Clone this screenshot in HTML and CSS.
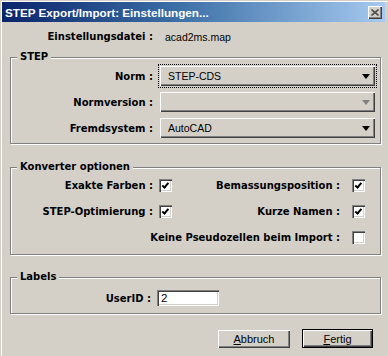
FILE: index.html
```html
<!DOCTYPE html>
<html lang="de">
<head>
<meta charset="utf-8">
<title>STEP Export/Import: Einstellungen...</title>
<link rel="stylesheet" href="styles.css">
</head>
<body>
<div class="window">
  <div class="titlebar">
    <span class="title">STEP Export/Import: Einstellungen...</span>
    <span class="close">
      <svg width="8" height="7" viewBox="0 0 8 7"><path d="M0.5 0.5 L7.5 6.5 M7.5 0.5 L0.5 6.5" stroke="#505050" stroke-width="1.6" fill="none"/></svg>
    </span>
  </div>
  <div class="content">
    <div class="filerow">
      <span class="lbl">Einstellungsdatei :</span>
      <span class="val">acad2ms.map</span>
    </div>

    <fieldset class="group step">
      <legend>STEP</legend>
      <div class="formgrid">
        <span class="lbl">Norm :</span>
        <div class="combo focused"><span class="val">STEP-CDS</span><span class="arrow"></span></div>
        <span class="lbl">Normversion :</span>
        <div class="combo disabled"><span class="val"></span><span class="arrow"></span></div>
        <span class="lbl">Fremdsystem :</span>
        <div class="combo"><span class="val">AutoCAD</span><span class="arrow"></span></div>
      </div>
    </fieldset>

    <fieldset class="group conv">
      <legend>Konverter optionen</legend>
      <div class="checkgrid">
        <span class="lbl">Exakte Farben :</span>
        <span class="cb checked"></span>
        <span class="lbl lbl2">Bemassungsposition :</span>
        <span class="cb checked"></span>
        <span class="lbl">STEP-Optimierung :</span>
        <span class="cb checked"></span>
        <span class="lbl lbl2">Kurze Namen :</span>
        <span class="cb checked"></span>
        <span class="lbl lbl2 wide">Keine Pseudozellen beim Import :</span>
        <span class="cb"></span>
      </div>
    </fieldset>

    <fieldset class="group labels">
      <legend>Labels</legend>
      <div class="userrow">
        <span class="lbl">UserID :</span>
        <span class="textbox">2</span>
      </div>
    </fieldset>

    <div class="buttons">
      <span class="btn"><u>A</u>bbruch</span>
      <span class="btn default"><u>F</u>ertig</span>
    </div>
  </div>
</div>
</body>
</html>
```

FILE: styles.css
```css
* { box-sizing: border-box; }

html, body {
  margin: 0;
  padding: 0;
  background: #d4d0c8;
}

.window {
  width: 388px;
  height: 356px;
  padding: 2px 3px 0 2px;
  background: #d4d0c8;
  box-shadow: inset 1px 1px #d4d0c8, inset 2px 2px #ffffff;
  overflow: hidden;
}

.titlebar {
  height: 20px;
  display: flex;
  align-items: center;
  justify-content: space-between;
  padding: 0 3px 0 3px;
  background: linear-gradient(to right, #0a246a 0%, #3a6ea5 45%, #a6caf0 100%);
}

.title {
  font-family: "Liberation Sans", Arial, sans-serif;
  font-weight: bold;
  font-size: 11.7px;
  color: #ffffff;
  white-space: nowrap;
}

.close {
  width: 14px;
  height: 13px;
  display: flex;
  align-items: center;
  justify-content: center;
  background: #d4d0c8;
  box-shadow: inset 1px 1px #ffffff, inset -1px -1px #404040, inset -2px -2px #808080;
}

.content {
  display: flex;
  flex-direction: column;
}

.lbl {
  font-family: "DejaVu Sans", sans-serif;
  font-weight: bold;
  font-size: 10px;
  color: #000;
  text-align: right;
  white-space: nowrap;
}

.val {
  font-family: "Liberation Sans", Arial, sans-serif;
  font-size: 10.5px;
  color: #000;
  white-space: nowrap;
}

.filerow {
  margin-top: 8px;
  display: grid;
  grid-template-columns: 151px auto;
  column-gap: 12px;
  align-items: center;
  height: 14px;
  line-height: 14px;
}

.group {
  margin: 0 5px 0 8px;
  padding: 0 4px 0 0;
  width: 371px;
  border: 1px solid #808080;
  box-shadow: inset 1px 1px #ffffff, 1px 1px #ffffff;
  min-width: 0;
}

.group legend {
  margin-left: 6px;
  padding: 0 3px;
  height: 12px;
  line-height: 12px;
  background: #d4d0c8;
  font-family: "DejaVu Sans", sans-serif;
  font-weight: bold;
  font-size: 10px;
  color: #000;
}

.step {
  margin-top: 7px;
  padding-top: 3px;
  padding-bottom: 5px;
}

.formgrid {
  display: grid;
  grid-template-columns: 142px 215px;
  column-gap: 7px;
  row-gap: 6px;
  align-items: center;
}

.combo {
  height: 20px;
  display: flex;
  align-items: center;
  justify-content: space-between;
  padding: 0 5px 0 8px;
  background: #d4d0c8;
  box-shadow: inset 1px 1px #ffffff, inset -1px -1px #404040, inset -2px -2px #808080;
}

.combo.focused {
  outline: 1px dotted #000;
  outline-offset: 1px;
}

.arrow {
  width: 0;
  height: 0;
  border-left: 4.5px solid transparent;
  border-right: 4.5px solid transparent;
  border-top: 5px solid #000;
}

.combo.disabled .arrow {
  border-top-color: #808080;
}

.conv {
  margin-top: 17px;
  padding-top: 6px;
  padding-bottom: 10px;
}

.checkgrid {
  display: grid;
  grid-template-columns: 142px 13px 168px 13px;
  column-gap: 6px;
  row-gap: 13px;
  align-items: center;
}

.checkgrid .lbl2 {
  padding-right: 6px;
}

.checkgrid .wide {
  grid-column: 1 / 4;
}

.cb {
  width: 13px;
  height: 13px;
  background: #ffffff;
  box-shadow: inset 1px 1px #808080, inset 2px 2px #404040, inset -1px -1px #ffffff, inset -2px -2px #d4d0c8;
  display: block;
  position: relative;
}

.cb.checked::after {
  content: "";
  position: absolute;
  left: 4px;
  top: 2px;
  width: 2px;
  height: 5px;
  border-right: 2px solid #000;
  border-bottom: 2px solid #000;
  transform: rotate(40deg) translate(0.5px, 0);
}

.labels {
  margin-top: 16px;
  padding-top: 7px;
  padding-bottom: 7px;
}

.userrow {
  display: grid;
  grid-template-columns: 140px 62px;
  column-gap: 6px;
  align-items: center;
}

.textbox {
  height: 16px;
  padding: 0 4px;
  background: #ffffff;
  box-shadow: inset 1px 1px #808080, inset 2px 2px #404040, inset -1px -1px #ffffff, inset -2px -2px #d4d0c8;
  font-family: "Liberation Sans", Arial, sans-serif;
  font-size: 11.5px;
  line-height: 16px;
  color: #000;
}

.buttons {
  margin-top: 16px;
  margin-right: 12px;
  display: flex;
  justify-content: flex-end;
  gap: 12px;
}

.btn {
  width: 72px;
  height: 18px;
  display: flex;
  align-items: center;
  justify-content: center;
  background: #d4d0c8;
  box-shadow: inset 1px 1px #ffffff, inset -1px -1px #404040, inset -2px -2px #808080;
  font-family: "Liberation Sans", Arial, sans-serif;
  font-size: 11px;
  color: #000;
}

.btn.default {
  width: 71px;
  height: 19px;
  margin-top: -1px;
  border: 1px solid #000;
}
```
